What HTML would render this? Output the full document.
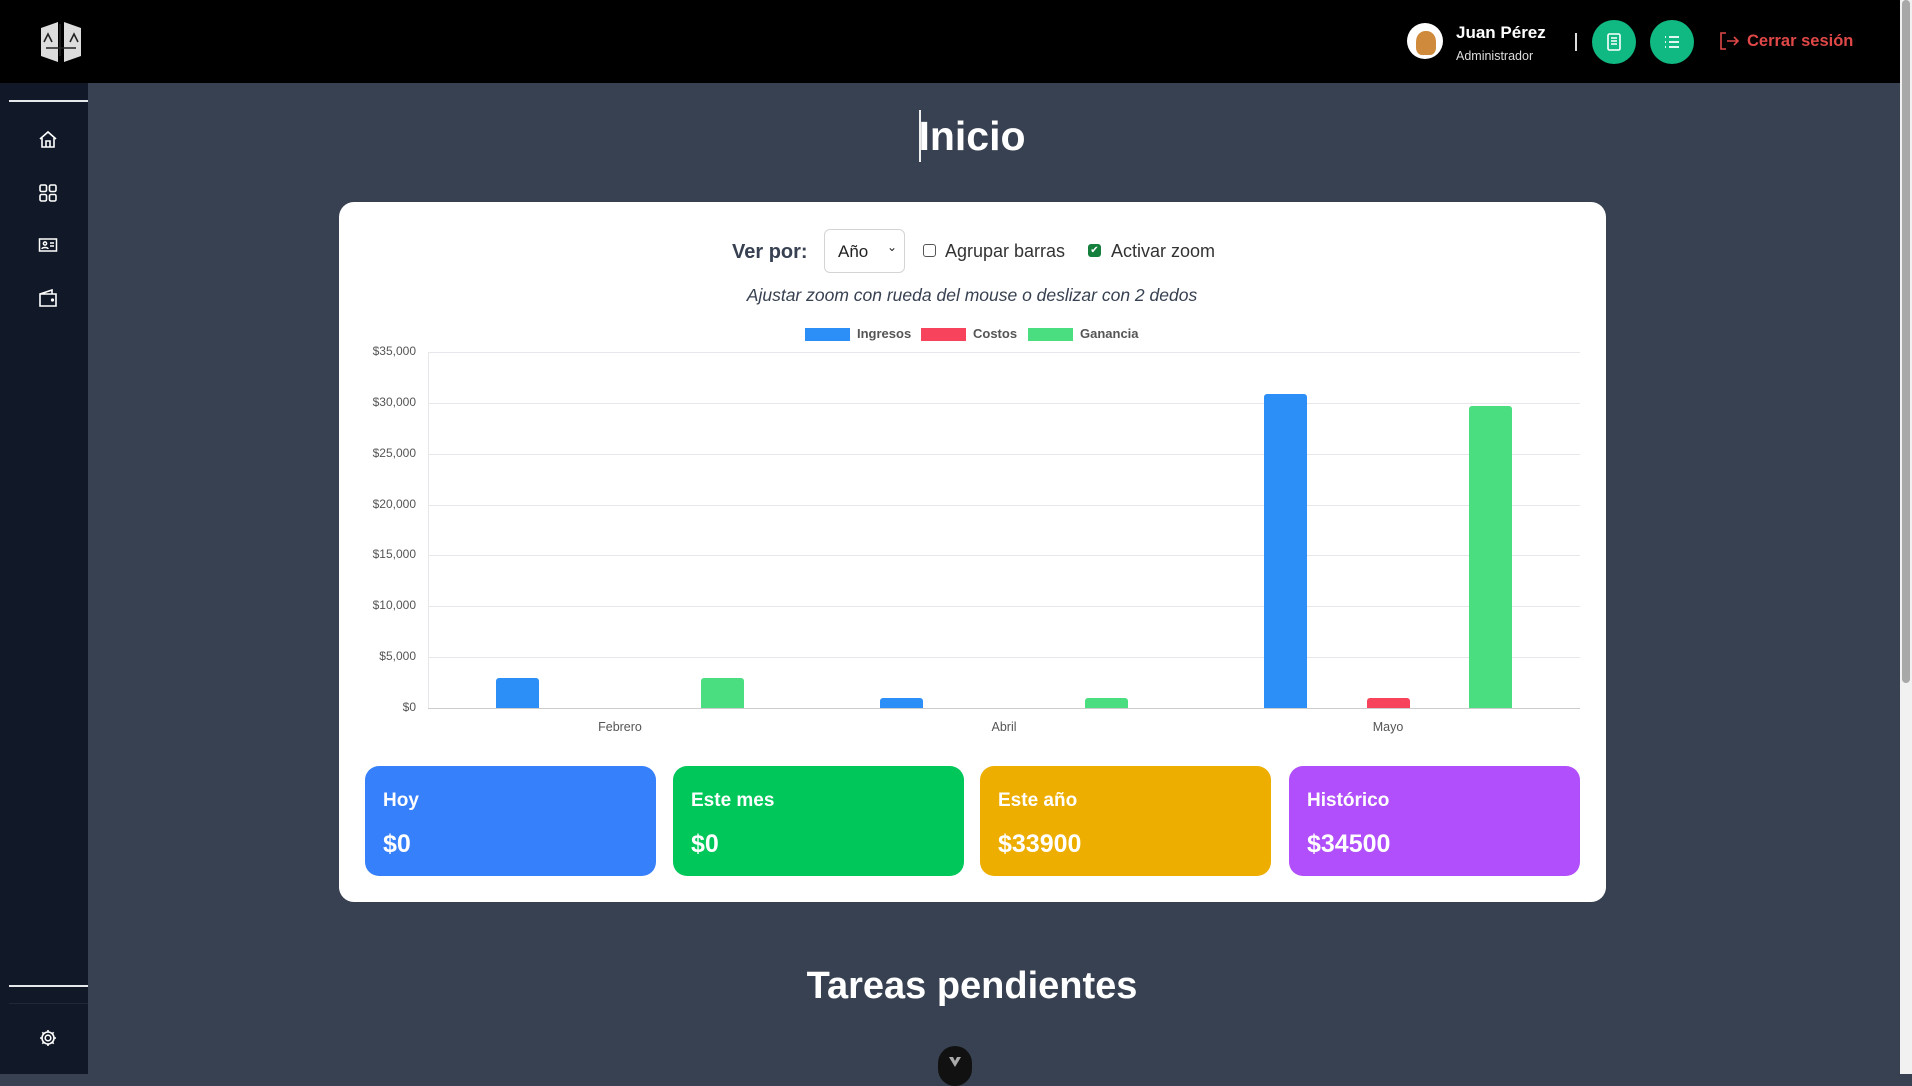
<!DOCTYPE html>
<html><head><meta charset="utf-8">
<style>
*{margin:0;padding:0;box-sizing:border-box}
html,body{width:1912px;height:1074px;overflow:hidden;background:#374151;font-family:"Liberation Sans",sans-serif}
.abs{position:absolute}
#hdr{left:0;top:0;width:1900px;height:83px;background:#000}
#side{left:0;top:83px;width:88px;height:991px;background:#111827}
.ic{position:absolute;left:38px;width:20px;height:20px}
.grid{position:absolute;left:428px;width:1152px;height:1px;background:#e5e7eb}
.yl{position:absolute;right:1496px;font-size:12px;color:#555;text-align:right;width:90px}
.bar{position:absolute;border-radius:3px 3px 0 0}
.xl{position:absolute;top:720px;font-size:12.5px;color:#555;transform:translateX(-50%)}
.st{position:absolute;top:766px;width:291px;height:110px;border-radius:14px;color:#fff;padding:24px 0 0 18px}
.st b{display:block;font-size:19px;margin-bottom:18px}
.st span{font-size:25px;font-weight:bold}
</style></head><body>
<div id="hdr" class="abs"></div>
<svg class="abs" style="left:40px;top:20px" width="42" height="44" viewBox="0 0 42 44">
<path d="M1 8 L18 2 L18 42 L1 36Z M24 2 L41 8 L41 36 L24 42Z" fill="#ddd"/>
<path d="M20 4 L20 36 M6 28 H36 M4 22 L8 14 L12 22 M30 22 L34 14 L38 22" stroke="#222" stroke-width="1.6" fill="none"/>
</svg>
<div class="abs" style="left:1407px;top:23px;width:36px;height:36px;border-radius:50%;background:#fff;overflow:hidden"><div style="margin:8px 0 0 9px;width:20px;height:24px;background:#d08a3c;border-radius:45% 45% 30% 30%"></div></div>
<div class="abs" style="left:1456px;top:23px;color:#fff;font-weight:bold;font-size:17px">Juan Pérez</div>
<div class="abs" style="left:1456px;top:49px;color:#ddd;font-size:12.5px">Administrador</div>
<div class="abs" style="left:1575px;top:33px;width:1.5px;height:18px;background:#ddd"></div>
<div class="abs" style="left:1592px;top:20px;width:44px;height:44px;border-radius:50%;background:#10b981"></div>
<svg class="abs" style="left:1604px;top:32px" width="20" height="20" viewBox="0 0 20 20" fill="none" stroke="#fff" stroke-width="1.6"><rect x="4" y="2" width="12" height="16" rx="1.5"/><path d="M7 6h6M7 9h6M7 12h6"/></svg>
<div class="abs" style="left:1650px;top:20px;width:44px;height:44px;border-radius:50%;background:#10b981"></div>
<svg class="abs" style="left:1662px;top:32px" width="20" height="20" viewBox="0 0 20 20" fill="none" stroke="#fff" stroke-width="1.8"><path d="M3 5h1M7 5h10M3 10h1M7 10h10M3 15h1M7 15h10"/></svg>
<svg class="abs" style="left:1719px;top:31px" width="22" height="20" viewBox="0 0 22 20" fill="none" stroke="#e04848" stroke-width="1.6"><path d="M7 2H2v16h5M8 10h11M15 6l4 4-4 4"/></svg>
<div class="abs" style="left:1747px;top:32px;color:#e04848;font-size:16.5px;font-weight:bold">Cerrar sesión</div>
<div class="abs" style="left:1900px;top:0;width:12px;height:1074px;background:#f1f1f1"></div>
<div class="abs" style="left:1902px;top:0;width:8px;height:683px;background:#a8a8a8;border-radius:4px"></div>
<div id="side" class="abs">
<div style="position:absolute;left:9px;top:17px;width:79px;height:1.5px;background:#e5e7eb"></div>
<svg class="ic" style="top:47px" viewBox="0 0 20 20" fill="none" stroke="#fff" stroke-width="1.6"><path d="M2 9L10 2l8 7M4 8v9h12V8M8 17v-6h4v6"/></svg>
<svg class="ic" style="top:100px" viewBox="0 0 20 20" fill="none" stroke="#fff" stroke-width="1.6"><rect x="2" y="2" width="6.5" height="6.5" rx="1.5"/><rect x="11.5" y="2" width="6.5" height="6.5" rx="1.5"/><rect x="2" y="11.5" width="6.5" height="6.5" rx="1.5"/><rect x="11.5" y="11.5" width="6.5" height="6.5" rx="1.5"/></svg>
<svg class="ic" style="top:152px" viewBox="0 0 20 20" fill="none" stroke="#fff" stroke-width="1.5"><rect x="1.5" y="4" width="17" height="12"/><circle cx="7" cy="8.5" r="1.6"/><path d="M4 14c0-2 6-2 6 0M12 8h4M12 11h4"/></svg>
<svg class="ic" style="top:205px" viewBox="0 0 20 20" fill="none" stroke="#fff" stroke-width="1.6"><path d="M2 6h16v12H2zM2 6l12-4v4"/><circle cx="14.5" cy="12" r="0.8" fill="#fff"/></svg>
<div style="position:absolute;left:9px;top:902px;width:79px;height:1.5px;background:#e5e7eb"></div>
<div style="position:absolute;left:9px;top:920px;width:79px;height:1px;background:#1f2937"></div>
<svg class="ic" style="top:945px" viewBox="0 0 20 20" fill="none" stroke="#fff" stroke-width="1.6"><circle cx="10" cy="10" r="2.8"/><path d="M10 2v2.5M10 15.5V18M2 10h2.5M15.5 10H18M4.3 4.3l1.8 1.8M13.9 13.9l1.8 1.8M4.3 15.7l1.8-1.8M13.9 6.1l1.8-1.8"/><circle cx="10" cy="10" r="6"/></svg>
</div>
<div class="abs" style="left:919px;top:110px;width:1.5px;height:52px;background:#eee"></div>
<div class="abs" style="left:0;width:1944px;top:113px;text-align:center;color:#fff;font-weight:bold;font-size:41px">Inicio</div>
<div class="abs" style="left:0;width:1944px;top:965px;text-align:center;color:#fff;font-weight:bold;font-size:38px">Tareas pendientes</div>
<div class="abs" style="left:938px;top:1046px;width:34px;height:40px;border-radius:17px;background:#111"></div>
<svg class="abs" style="left:948px;top:1056px" width="14" height="12" viewBox="0 0 14 12"><path d="M1 1l6 10 6-10h-4l-2 4-2-4z" fill="#aaa"/></svg>
<div class="abs" style="left:339px;top:202px;width:1267px;height:700px;background:#fff;border-radius:15px"></div>
<div class="abs" style="left:732px;top:241px;font-size:20px;font-weight:bold;color:#374151">Ver por:</div>
<div class="abs" style="left:824px;top:229px;width:81px;height:44px;border:1px solid #d4d4d4;border-radius:6px;font-size:17px;color:#222;padding:12px 0 0 13px">Año<span style="position:absolute;left:62px;top:10px;font-size:12px">&#8964;</span></div>
<div class="abs" style="left:923px;top:244px;width:13px;height:13px;border:1.5px solid #555;border-radius:3px"></div>
<div class="abs" style="left:945px;top:241px;font-size:18px;color:#333">Agrupar barras</div>
<div class="abs" style="left:1088px;top:244px;width:13px;height:13px;background:#15803d;border-radius:3px;color:#fff;font-size:10px;text-align:center;line-height:13px">✔</div>
<div class="abs" style="left:1111px;top:241px;font-size:18px;color:#333">Activar zoom</div>
<div class="abs" style="left:0;width:1944px;top:285px;text-align:center;font-size:17.5px;font-style:italic;color:#374151">Ajustar zoom con rueda del mouse o deslizar con 2 dedos</div>
<div class="abs" style="left:805px;top:328px;width:45px;height:13px;background:#2b8ff7"></div>
<div class="abs" style="left:857px;top:326px;font-size:13px;font-weight:bold;color:#555">Ingresos</div>
<div class="abs" style="left:921px;top:328px;width:45px;height:13px;background:#f8435c"></div>
<div class="abs" style="left:973px;top:326px;font-size:13px;font-weight:bold;color:#555">Costos</div>
<div class="abs" style="left:1028px;top:328px;width:45px;height:13px;background:#4ade80"></div>
<div class="abs" style="left:1080px;top:326px;font-size:13px;font-weight:bold;color:#555">Ganancia</div>
<div class="grid" style="top:352px"></div><div class="grid" style="top:403px"></div><div class="grid" style="top:454px"></div><div class="grid" style="top:505px"></div><div class="grid" style="top:555px"></div><div class="grid" style="top:606px"></div><div class="grid" style="top:657px"></div>
<div class="grid" style="top:708px;background:#ccc"></div>
<div class="abs" style="left:428px;top:352px;width:1px;height:356px;background:#e5e7eb"></div>
<div class="yl" style="top:344px">$35,000</div><div class="yl" style="top:395px">$30,000</div><div class="yl" style="top:446px">$25,000</div><div class="yl" style="top:497px">$20,000</div><div class="yl" style="top:547px">$15,000</div><div class="yl" style="top:598px">$10,000</div><div class="yl" style="top:649px">$5,000</div><div class="yl" style="top:700px">$0</div>
<div class="bar" style="left:496px;top:678px;width:43px;height:30px;background:#2b8ff7"></div>
<div class="bar" style="left:701px;top:678px;width:43px;height:30px;background:#4ade80"></div>
<div class="bar" style="left:880px;top:698px;width:43px;height:10px;background:#2b8ff7"></div>
<div class="bar" style="left:1085px;top:698px;width:43px;height:10px;background:#4ade80"></div>
<div class="bar" style="left:1264px;top:394px;width:43px;height:314px;background:#2b8ff7"></div>
<div class="bar" style="left:1367px;top:698px;width:43px;height:10px;background:#f8435c"></div>
<div class="bar" style="left:1469px;top:406px;width:43px;height:302px;background:#4ade80"></div>
<div class="xl" style="left:620px">Febrero</div><div class="xl" style="left:1004px">Abril</div><div class="xl" style="left:1388px">Mayo</div>
<div class="st" style="left:365px;background:#3680fb"><b>Hoy</b><span>$0</span></div>
<div class="st" style="left:673px;background:#00c75a"><b>Este mes</b><span>$0</span></div>
<div class="st" style="left:980px;background:#edae00"><b>Este año</b><span>$33900</span></div>
<div class="st" style="left:1289px;background:#b04ffb"><b>Histórico</b><span>$34500</span></div>
</body></html>
